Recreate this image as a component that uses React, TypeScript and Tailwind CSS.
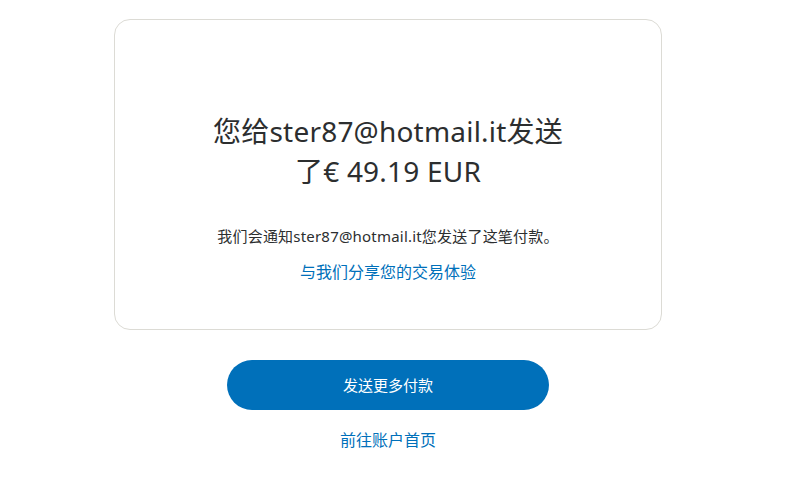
export default function App() {
  return (
    <div
      className="w-[776px] bg-white pt-[19px] text-[#2c2e2f]"
      style={{ fontFamily: '"Noto Sans", "Noto Sans CJK SC", sans-serif' }}
    >
      <div className="mx-auto w-[548px] h-[311px] rounded-[16px] border border-[#dcdbd5] px-8 pt-[91px] text-center">
        <h1 className="mx-auto text-[28px] leading-[40px] font-normal tracking-[0.2px]">
          您给ster87@hotmail.it发送
          <br />
          了€ 49.19 EUR
        </h1>
        <p className="mt-[34px] text-[15px] leading-[22px] tracking-[0.2px]">
          我们会通知ster87@hotmail.it您发送了这笔付款。
        </p>
        <a href="#" className="mt-[13px] block text-[16px] leading-[24px] text-[#0070ba]">
          与我们分享您的交易体验
        </a>
      </div>
      <div className="mt-[30px] flex flex-col items-center">
        <button className="h-[50px] w-[322px] rounded-full bg-[#0070ba] text-[15px] text-white">
          发送更多付款
        </button>
        <a href="#" className="mt-[18px] text-[16px] leading-[24px] text-[#0070ba]">
          前往账户首页
        </a>
      </div>
    </div>
  );
}
